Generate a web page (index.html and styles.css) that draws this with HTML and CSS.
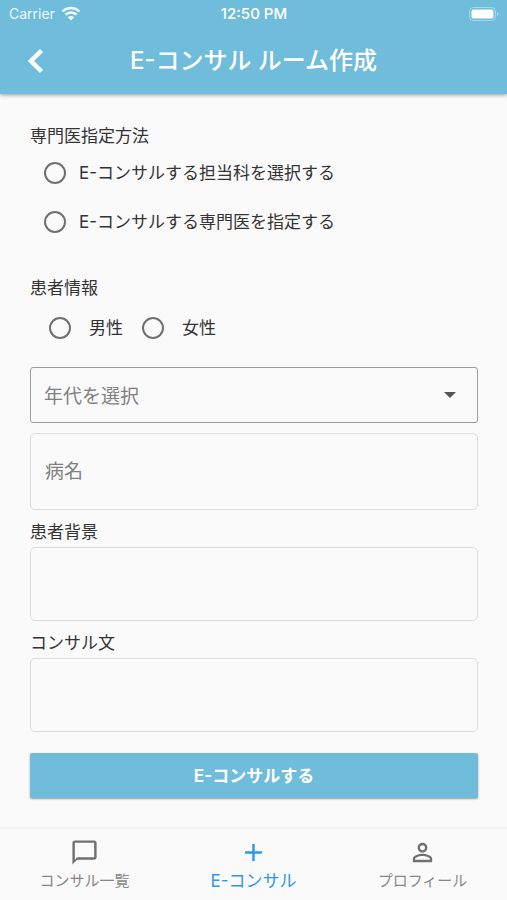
FILE: index.html
```html
<!DOCTYPE html>
<html lang="ja">
<head>
<meta charset="utf-8">
<meta name="viewport" content="width=device-width, initial-scale=1">
<title>E-コンサル ルーム作成</title>
<link rel="stylesheet" href="styles.css">
</head>
<body>
<header class="header">
  <div class="status">
    <div class="carrier">
      <span>Carrier</span>
      <svg class="wifi" viewBox="0 0 20 15" aria-hidden="true">
        <path d="M1.5 5.4a12.2 12.2 0 0 1 17 0M4.5 8.7a7.8 7.8 0 0 1 11 0" fill="none" stroke="currentColor" stroke-width="2.6"/>
        <path d="M6.8 11.2a4.6 4.6 0 0 1 6.4 0L10 14.4z" fill="currentColor"/>
      </svg>
    </div>
    <time class="clock">12:50 PM</time>
    <svg class="battery" viewBox="0 0 30 14" aria-hidden="true">
      <rect x=".5" y=".5" width="26" height="13" rx="4" fill="none" stroke="#fff" stroke-opacity=".4"/>
      <rect x="2.5" y="2.5" width="22" height="9" rx="2" fill="#fff"/>
      <path d="M28 5v4q1.500-.5 1.500-2T28 5z" fill="#fff" fill-opacity=".5"/>
    </svg>
  </div>
  <div class="appbar">
    <button class="back" type="button" aria-label="戻る">
      <svg viewBox="0 0 16 26" aria-hidden="true"><path d="M13.500 2.500 3 13l10.500 10.500" fill="none" stroke="currentColor" stroke-width="4.500"/></svg>
    </button>
    <h1 class="title">E-コンサル ルーム作成</h1>
  </div>
</header>

<main class="main">
  <form class="form">
    <fieldset class="group">
      <legend class="label">専門医指定方法</legend>
      <div class="methods">
        <label class="method"><input class="radio" type="radio" name="method"><span>E-コンサルする担当科を選択する</span></label>
        <label class="method"><input class="radio" type="radio" name="method"><span>E-コンサルする専門医を指定する</span></label>
      </div>
    </fieldset>
    <fieldset class="group patient">
      <legend class="label">患者情報</legend>
      <div class="genders">
        <label class="gender"><input class="radio" type="radio" name="gender"><span>男性</span></label>
        <label class="gender"><input class="radio" type="radio" name="gender"><span>女性</span></label>
      </div>
    </fieldset>
    <div class="select-box">
      <select class="select" aria-label="年代を選択">
        <option>年代を選択</option>
      </select>
      <svg class="caret" viewBox="0 0 12 6" aria-hidden="true"><path d="M0 0h12L6 6z" fill="currentColor"/></svg>
    </div>
    <input class="box disease" type="text" placeholder="病名" aria-label="病名">
    <label class="label field-label" for="background">患者背景</label>
    <textarea class="box area" id="background"></textarea>
    <label class="label field-label" for="message">コンサル文</label>
    <textarea class="box area" id="message"></textarea>
    <button class="submit" type="button">E-コンサルする</button>
  </form>
</main>

<nav class="nav">
  <a class="tab" href="#list">
    <svg class="icon" viewBox="0 0 24 24" aria-hidden="true"><path fill="currentColor" d="M20 2H4c-1.100 0-2 .9-2 2v18l4-4h14c1.100 0 2-.9 2-2V4c0-1.100-.9-2-2-2zm0 14H6l-2 2V4h16v12z"/></svg>
    <span>コンサル一覧</span>
  </a>
  <a class="tab active" href="#new" aria-current="page">
    <svg class="icon" viewBox="0 0 24 24" aria-hidden="true"><path fill="currentColor" d="M19 13h-6v6h-2v-6H5v-2h6V5h2v6h6v2z"/></svg>
    <span>E-コンサル</span>
  </a>
  <a class="tab" href="#profile">
    <svg class="icon" viewBox="0 0 24 24" aria-hidden="true"><path fill="currentColor" d="M12 5.900c1.160 0 2.100.94 2.100 2.100s-.94 2.100-2.100 2.100S9.900 9.160 9.900 8s.94-2.100 2.100-2.100m0 9c2.970 0 6.100 1.460 6.100 2.100v1.100H5.900V17c0-.64 3.130-2.100 6.100-2.100M12 4C9.790 4 8 5.790 8 8s1.790 4 4 4 4-1.790 4-4-1.790-4-4-4zm0 9c-2.670 0-8 1.340-8 4v3h16v-3c0-2.660-5.330-4-8-4z"/></svg>
    <span>プロフィール</span>
  </a>
</nav>
</body>
</html>
```
FILE: styles.css
```css
* {
  box-sizing: border-box;
}

body {
  margin: 0;
  min-height: 100vh;
  display: flex;
  flex-direction: column;
  background: #fafafa;
  color: #333;
  font-family: Inter, "Noto Sans CJK JP", sans-serif;
  font-size: 17px;
  line-height: 24px;
}

button,
input,
select,
textarea {
  font: inherit;
  color: inherit;
  margin: 0;
}

.header {
  background: #6fbdda;
  color: #fff;
  box-shadow: 0 1px 4px rgba(0, 0, 0, 0.4);
}

.status {
  display: grid;
  grid-template-columns: 1fr auto 1fr;
  align-items: center;
  height: 27px;
  padding: 0 8px 0 9px;
  font-size: 14px;
}

.carrier {
  display: flex;
  align-items: center;
  gap: 6px;
  opacity: 0.9;
}

.wifi {
  width: 20px;
  height: 15px;
}

.clock {
  font-size: 15px;
  font-weight: 500;
}

.battery {
  width: 30px;
  height: 14px;
  justify-self: end;
}

.appbar {
  display: grid;
  grid-template-columns: 72px 1fr 72px;
  align-items: center;
  height: 67px;
}

.back {
  display: flex;
  justify-content: center;
  padding: 8px;
  border: 0;
  background: none;
  color: #fff;
}

.back svg {
  width: 16px;
  height: 26px;
}

.title {
  margin: 0;
  font-size: 24px;
  line-height: 36px;
  font-weight: 500;
  text-align: center;
  white-space: nowrap;
}

.main {
  flex: 1;
  padding: 30px 29px 28px 30px;
}

.form {
  display: flex;
  flex-direction: column;
}

.group {
  margin: 0;
  padding: 0;
  border: 0;
}

.label {
  display: block;
  padding: 0;
}

.methods {
  display: flex;
  flex-direction: column;
}

.method {
  display: flex;
  align-items: center;
  gap: 13px;
  height: 49px;
  padding-left: 14px;
}

.patient {
  margin-top: 30px;
}

.genders {
  display: flex;
  gap: 19px;
  padding: 16px 0 0 19px;
}

.gender {
  display: flex;
  align-items: center;
  gap: 18px;
}

.radio {
  appearance: none;
  flex: none;
  width: 22px;
  height: 22px;
  border: 2px solid #707070;
  border-radius: 50%;
}

.radio:checked {
  background: radial-gradient(#2196f3 5px, transparent 6px);
}

.select-box {
  display: grid;
  align-items: center;
  margin-top: 27px;
}

.select {
  grid-area: 1 / 1;
  appearance: none;
  width: 100%;
  height: 56px;
  padding: 3px 40px 0 13px;
  border: 1px solid #9e9e9e;
  border-radius: 3px;
  background: transparent;
  color: #808080;
  font-size: 19px;
}

.caret {
  grid-area: 1 / 1;
  justify-self: end;
  width: 12px;
  height: 6px;
  margin-right: 22px;
  color: #555;
  pointer-events: none;
}

.box {
  display: block;
  width: 100%;
  padding: 8px 14px;
  border: 1px solid #ddd;
  border-radius: 5px;
  background: transparent;
  font-size: 19px;
  resize: none;
}

.box::placeholder {
  color: #808080;
  opacity: 1;
}

.disease {
  height: 77px;
  margin-top: 10px;
}

.field-label {
  margin: 10px 0 3px;
}

.area {
  height: 74px;
}

.submit {
  height: 45px;
  margin-top: 21px;
  border: 0;
  border-radius: 2px;
  background: #6fbdda;
  box-shadow: 0 1px 2px rgba(0, 0, 0, 0.4);
  color: #fff;
  font-weight: 700;
}

.nav {
  display: grid;
  grid-template-columns: repeat(3, 1fr);
  height: 73px;
  border-top: 2px solid #f3f3f3;
}

.tab {
  display: flex;
  flex-direction: column;
  align-items: center;
  gap: 2px;
  padding-top: 9px;
  color: #888;
  font-size: 15px;
  text-decoration: none;
}

.tab .icon {
  width: 29px;
  height: 29px;
  color: #707070;
}

.tab.active,
.tab.active .icon {
  color: #2b98f0;
}

.tab.active {
  font-size: 17px;
}
```
